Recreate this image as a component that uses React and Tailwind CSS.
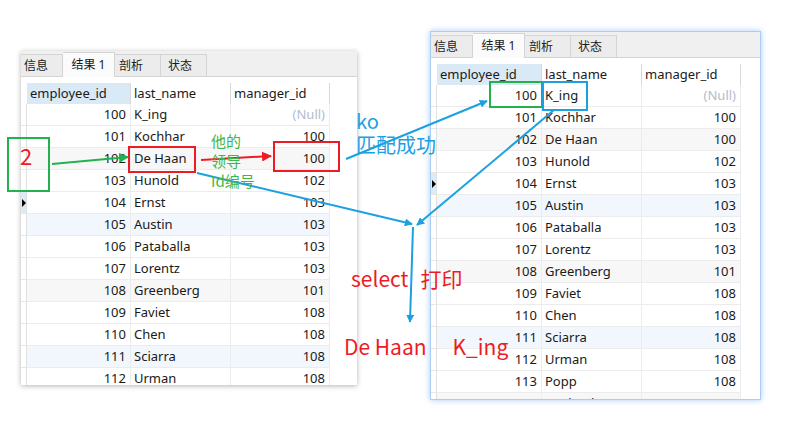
import React from "react";

const rows = [
  [100, "K_ing", null],
  [101, "Kochhar", 100],
  [102, "De Haan", 100],
  [103, "Hunold", 102],
  [104, "Ernst", 103],
  [105, "Austin", 103],
  [106, "Pataballa", 103],
  [107, "Lorentz", 103],
  [108, "Greenberg", 101],
  [109, "Faviet", 108],
  [110, "Chen", 108],
  [111, "Sciarra", 108],
  [112, "Urman", 108],
  [113, "Popp", 108],
  [114, "Raphaely", 100],
];

const rowBg = (i) =>
  i % 6 === 2 ? "bg-[#f7f7f7]" : i % 6 === 5 ? "bg-[#f1f7fd]" : "bg-white";

function Tabs() {
  return (
    <div className="h-[26px] bg-[#f0f0f0] border-b border-[#d4d4d4] flex items-end text-[12px] text-[#1a1a1a]">
      <div className="w-[42px] h-[22px] border border-b-0 border-l-0 border-[#d4d4d4] bg-[#ececec] flex items-center pl-[3px]">信息</div>
      <div className="w-[52px] border border-b-0 border-l-0 border-[#d4d4d4] bg-[#fbfbfb] flex items-center justify-center -mb-px h-[25px]">结果 1</div>
      <div className="w-[46px] h-[22px] border border-b-0 border-l-0 border-[#d4d4d4] bg-[#ececec] flex items-center pl-[4px]">剖析</div>
      <div className="w-[46px] h-[22px] border border-b-0 border-l-0 border-[#d4d4d4] bg-[#ececec] flex items-center pl-[7px]">状态</div>
    </div>
  );
}

function Grid({ sel, indicator, cols }) {
  return (
    <div className="flex text-[13px] text-[#1a1a1a]">
      <div className="flex flex-col" style={{ width: sel }}>
        <div className="h-[21px]" />
        {rows.map((r, i) => (
          <div key={i} className={`h-[22px] border-b border-[#e6e6e6] border-r border-r-[#e0e0e0] flex items-center ${i === 4 ? "bg-[#dcebf8]" : ""}`}>
            {i === indicator ? (
              <div className="w-0 h-0 border-y-[4px] border-y-transparent border-l-[4px] border-l-black ml-[1px]" />
            ) : null}
          </div>
        ))}
      </div>
      <div className="flex flex-col">
        <div className="h-[21px] flex">
          <div className="bg-[#dae9f6] border-r border-[#d8d8d8] pl-[3px] flex items-center" style={{ width: cols[0] }}>employee_id</div>
          <div className="border-r border-[#d8d8d8] pl-[3px] flex items-center bg-white" style={{ width: cols[1] }}>last_name</div>
          <div className="border-r border-[#d8d8d8] pl-[3px] flex items-center bg-white" style={{ width: cols[2] }}>manager_id</div>
        </div>
        {rows.map((r, i) => (
          <div key={i} className={`h-[22px] flex border-b border-[#ececec] ${rowBg(i)}`}>
            <div className="border-r border-[#ececec] pr-[4px] flex items-center justify-end" style={{ width: cols[0] }}>{r[0]}</div>
            <div className="border-r border-[#ececec] pl-[3px] flex items-center" style={{ width: cols[1] }}>{r[1]}</div>
            <div className="border-r border-[#ececec] pr-[4px] flex items-center justify-end" style={{ width: cols[2] }}>
              {r[2] === null ? <span className="text-[#b4bccb]">(Null)</span> : r[2]}
            </div>
          </div>
        ))}
      </div>
    </div>
  );
}

export default function App() {
  const font = { fontFamily: '"Noto Sans", "Noto Sans CJK SC", sans-serif' };
  const cjk = { fontFamily: '"Noto Sans CJK SC", sans-serif' };
  return (
    <div className="relative w-[786px] h-[441px] bg-white overflow-hidden" style={font}>
      {/* left window */}
      <div className="absolute left-[21px] top-[51px] w-[336px] h-[334px] bg-white overflow-hidden shadow-[0_1px_5px_rgba(0,0,0,0.3)]">
        <Tabs />
        <div className="h-[6px]" />
        <Grid sel={6} indicator={4} cols={[104, 100, 99]} />
      </div>

      {/* right window */}
      <div className="absolute left-[430px] top-[31px] w-[331px] h-[369px] bg-white overflow-hidden border border-[#a9cdf3] shadow-[0_0_6px_rgba(90,160,240,0.55)]">
        <Tabs />
        <div className="h-[6px]" />
        <Grid sel={6} indicator={4} cols={[105, 100, 99]} />
      </div>

      {/* annotation overlay */}
      <svg className="absolute left-0 top-0 pointer-events-none" width="786" height="441" viewBox="0 0 786 441">
        <defs>
          <marker id="ag" viewBox="0 0 10 10" refX="9" refY="5" markerWidth="5" markerHeight="5" orient="auto">
            <path d="M0 0 L10 5 L0 10 z" fill="#22b14c" />
          </marker>
          <marker id="ar" viewBox="0 0 10 10" refX="9" refY="5" markerWidth="5" markerHeight="5" orient="auto">
            <path d="M0 0 L10 5 L0 10 z" fill="#ed1c24" />
          </marker>
          <marker id="ab" viewBox="0 0 10 10" refX="9" refY="5" markerWidth="4" markerHeight="4" orient="auto">
            <path d="M0 0 L10 5 L0 10 z" fill="#1ba1e2" />
          </marker>
        </defs>
        <rect x="8" y="138" width="41" height="53" fill="none" stroke="#22b14c" strokeWidth="2" />
        <rect x="129" y="147" width="66" height="25" fill="none" stroke="#ed1c24" strokeWidth="2" />
        <rect x="274" y="142" width="65" height="29" fill="none" stroke="#ed1c24" strokeWidth="2" />
        <rect x="490" y="82" width="52" height="25" fill="none" stroke="#22b14c" strokeWidth="2" />
        <rect x="543" y="82" width="44" height="28" fill="none" stroke="#1ba1e2" strokeWidth="2" />
        <line x1="52" y1="164" x2="128" y2="157" stroke="#22b14c" strokeWidth="2" markerEnd="url(#ag)" />
        <line x1="201" y1="160" x2="271" y2="156" stroke="#ed1c24" strokeWidth="2" markerEnd="url(#ar)" />
        <line x1="346" y1="159" x2="487" y2="101" stroke="#1ba1e2" strokeWidth="2" markerEnd="url(#ab)" />
        <line x1="554" y1="110" x2="417" y2="225" stroke="#1ba1e2" strokeWidth="2" markerEnd="url(#ab)" />
        <line x1="197" y1="173" x2="412" y2="224" stroke="#1ba1e2" strokeWidth="2" markerEnd="url(#ab)" />
        <line x1="413" y1="227" x2="410" y2="322" stroke="#1ba1e2" strokeWidth="2" markerEnd="url(#ab)" />
      </svg>

      {/* annotation texts */}
      <div className="absolute left-[20px] top-[144px] text-[22px] leading-none text-[#ed1c24]" style={cjk}>2</div>
      <div className="absolute left-[211px] top-[131px] text-[15px] leading-[20px] text-[#3fb649]" style={cjk}>
        <div>他的</div>
        <div>领导</div>
        <div>Id编号</div>
      </div>
      <div className="absolute left-[356px] top-[109px] text-[20px] leading-[24px] text-[#1ba1e2]" style={cjk}>
        <div>ko</div>
        <div>匹配成功</div>
      </div>
      <div className="absolute left-[351px] top-[266px] text-[21px] leading-[24px] text-[#ed1c24] flex gap-[12px]" style={cjk}>
        <span>select</span>
        <span>打印</span>
      </div>
      <div className="absolute left-[344px] top-[334px] text-[21px] leading-[24px] text-[#ed1c24] flex gap-[26px]" style={cjk}>
        <span>De Haan</span>
        <span>K_ing</span>
      </div>
    </div>
  );
}
